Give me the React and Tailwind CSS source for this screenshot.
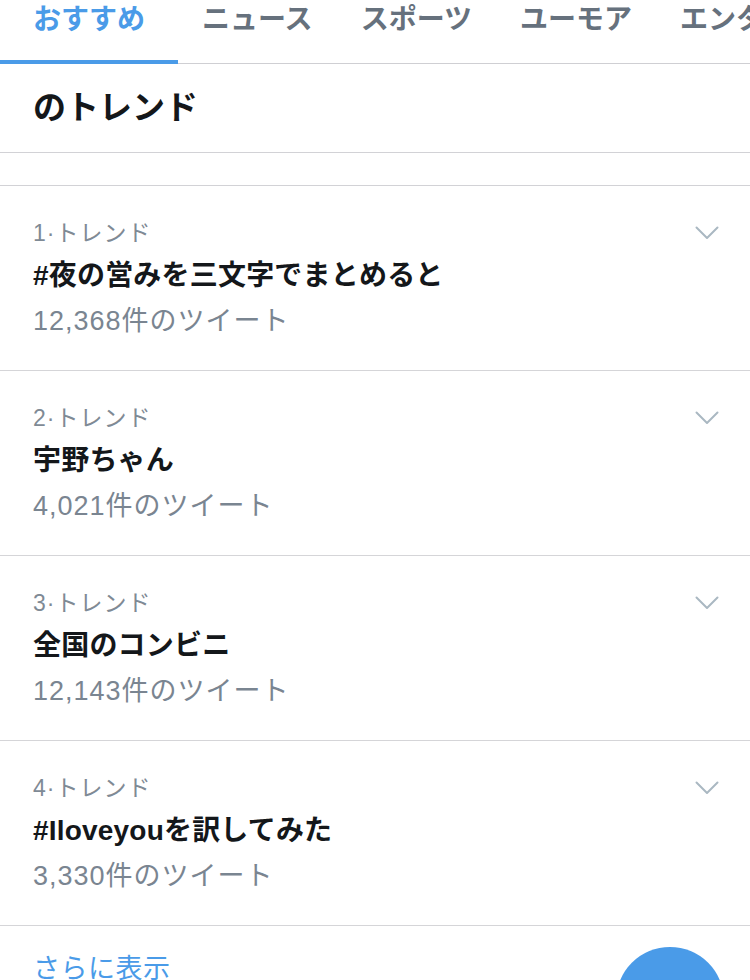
import React from 'react';

const tabs = ['おすすめ', 'ニュース', 'スポーツ', 'ユーモア', 'エンタメ'];

const trends = [
  { rank: 1, name: '#夜の営みを三文字でまとめると', count: '12,368' },
  { rank: 2, name: '宇野ちゃん', count: '4,021' },
  { rank: 3, name: '全国のコンビニ', count: '12,143' },
  { rank: 4, name: '#Iloveyouを訳してみた', count: '3,330' },
];

const Chevron = () => (
  <svg width="24" height="14" viewBox="0 0 24 14" fill="none">
    <path d="M1.5 1.5 L12 12 L22.5 1.5" stroke="#aab8c2" strokeWidth="2" strokeLinecap="round" strokeLinejoin="round" />
  </svg>
);

const TrendItem = ({ trend }) => {
  return (
    <div className="relative h-[185px] border-b border-[#d5d5d8] px-[33px] pt-[32px]">
      <p className="text-[23px] leading-[30px] tracking-[1px] text-[#7f8a95]">{trend.rank}·トレンド</p>
      <p className="mt-[10px] text-[28px] leading-[36px] tracking-[0.2px] font-bold text-[#14171a]">{trend.name}</p>
      <p className="mt-[9px] text-[27px] leading-[36px] tracking-[1px] text-[#7a8591]">{trend.count}件のツイート</p>
      <div className="absolute right-[31px] top-[40px]">
        <Chevron />
      </div>
    </div>
  );
};

const App = () => {
  return (
    <div
      className="relative h-[980px] w-[750px] overflow-hidden bg-white"
      style={{ fontFamily: '"Liberation Sans", "Noto Sans CJK JP", sans-serif' }}
    >
      <div className="flex h-[64px] whitespace-nowrap border-b border-[#cfcfd3]">
        {tabs.map((tab, i) => (
          <div
            key={tab}
            className={
              i === 0
                ? 'relative shrink-0 px-[33px] pt-[2px] text-[28px] leading-[36px] font-bold text-[#4a9be8]'
                : 'shrink-0 px-[24px] pt-[2px] text-[28px] leading-[36px] font-bold text-[#66717d]'
            }
          >
            {tab}
            {i === 0 && <div className="absolute bottom-[-1px] left-0 right-0 h-[4px] bg-[#4a9be8]" />}
          </div>
        ))}
      </div>

      <div className="flex h-[89px] items-center border-b border-[#d2d2d6] px-[33px]">
        <h2 className="text-[33px] font-bold text-[#14171a]">のトレンド</h2>
      </div>

      <div className="h-[33px] border-b border-[#d2d2d6]" />

      {trends.map((t) => (
        <TrendItem key={t.rank} trend={t} />
      ))}

      <div className="px-[33px] pt-[26px]">
        <p className="text-[27px] leading-[34px] tracking-[0.5px] text-[#4a9be8]">さらに表示</p>
      </div>

      <div className="absolute left-[616px] top-[947px] h-[108px] w-[108px] rounded-full bg-[#4a9be8]" />
    </div>
  );
};

export default App;
